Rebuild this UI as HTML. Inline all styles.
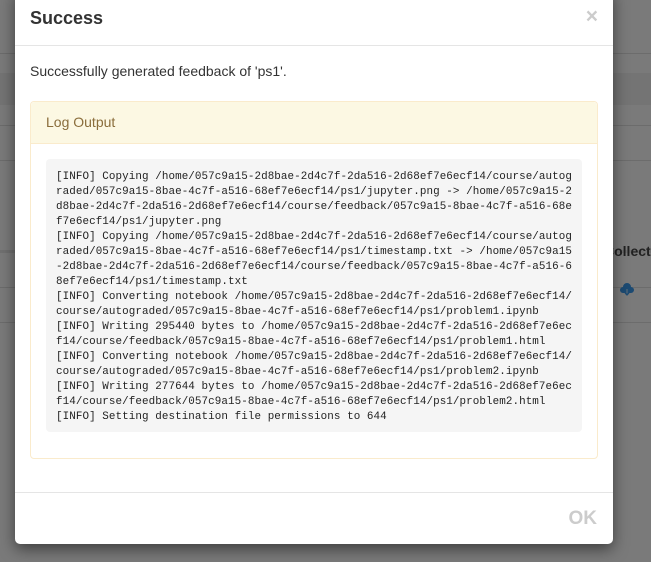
<!DOCTYPE html>
<html><head><meta charset="utf-8"><style>
html,body{margin:0;padding:0;width:651px;height:562px;overflow:hidden;background:#7a7a7a;font-family:"Liberation Sans",Arial,sans-serif;}
.bgline{position:absolute;left:0;right:0;height:1px;background:#6c6c6c;}
.modal{position:absolute;left:15px;top:-10px;width:598px;height:554px;background:#fff;border-radius:0 0 5px 5px;box-shadow:0 5px 15px rgba(0,0,0,.5);}
.hdr{position:absolute;left:0;right:0;top:0;height:55px;border-bottom:1px solid #e5e5e5;}
.title{position:absolute;left:15px;top:18px;font-size:18px;font-weight:bold;color:#333;}
.close{position:absolute;right:15px;top:15px;font-size:21px;font-weight:bold;color:#ccc;}
.msg{position:absolute;left:15px;top:73px;font-size:14px;color:#333;}
.panel{position:absolute;left:15px;top:111px;width:566px;height:356px;border:1px solid #faebcc;border-radius:4px;}
.ph{height:41px;background:#fcf8e3;border-bottom:1px solid #faebcc;color:#8a6d3b;font-size:14px;line-height:41px;padding-left:15px;border-radius:4px 4px 0 0;}
pre{position:absolute;left:15px;top:57px;width:516px;height:262px;margin:0;padding:11px 10px 0 10px;background:#f5f5f5;border-radius:4px;font-family:"Liberation Mono","DejaVu Sans Mono",monospace;font-size:10.9px;letter-spacing:0.08px;line-height:15px;color:#222;white-space:pre;overflow:hidden;}
.ftr{position:absolute;left:0;right:0;top:502px;border-top:1px solid #e5e5e5;}
.ok{position:absolute;right:16px;top:518px;font-size:19px;font-weight:bold;color:#ccc;}
</style></head><body>
<div class="bgline" style="top:53px"></div>
<div style="position:absolute;left:0;right:0;top:73px;height:32px;background:#747474"></div>
<div class="bgline" style="top:125px"></div>
<div class="bgline" style="top:160px"></div>
<div class="bgline" style="top:250px;height:3px;background:#707070"></div>
<div class="bgline" style="top:287px"></div>
<div class="bgline" style="top:322px"></div>
<div style="position:absolute;left:604px;top:243px;font-size:14px;font-weight:bold;color:#222">Collect</div>
<svg style="position:absolute;left:619px;top:282px" width="16" height="16" viewBox="0 0 16 16"><path d="M4 11a3 3 0 0 1 0-6 4 4 0 0 1 8 0 3 3 0 0 1 0 6z" fill="#1c4a72"/><path d="M8 7v7M5.5 11.5 8 14l2.5-2.5" stroke="#7a7a7a" stroke-width="2" fill="none"/><path d="M8 7v6M6 11l2 2 2-2" stroke="#1c4a72" stroke-width="1.2" fill="none"/></svg>
<div class="modal">
<div class="hdr"><div class="title">Success</div><div class="close">×</div></div>
<div class="msg">Successfully generated feedback of 'ps1'.</div>
<div class="panel"><div class="ph">Log Output</div>
<pre>[INFO] Copying /home/057c9a15-2d8bae-2d4c7f-2da516-2d68ef7e6ecf14/course/autog
raded/057c9a15-8bae-4c7f-a516-68ef7e6ecf14/ps1/jupyter.png -&gt; /home/057c9a15-2
d8bae-2d4c7f-2da516-2d68ef7e6ecf14/course/feedback/057c9a15-8bae-4c7f-a516-68e
f7e6ecf14/ps1/jupyter.png
[INFO] Copying /home/057c9a15-2d8bae-2d4c7f-2da516-2d68ef7e6ecf14/course/autog
raded/057c9a15-8bae-4c7f-a516-68ef7e6ecf14/ps1/timestamp.txt -&gt; /home/057c9a15
-2d8bae-2d4c7f-2da516-2d68ef7e6ecf14/course/feedback/057c9a15-8bae-4c7f-a516-6
8ef7e6ecf14/ps1/timestamp.txt
[INFO] Converting notebook /home/057c9a15-2d8bae-2d4c7f-2da516-2d68ef7e6ecf14/
course/autograded/057c9a15-8bae-4c7f-a516-68ef7e6ecf14/ps1/problem1.ipynb
[INFO] Writing 295440 bytes to /home/057c9a15-2d8bae-2d4c7f-2da516-2d68ef7e6ec
f14/course/feedback/057c9a15-8bae-4c7f-a516-68ef7e6ecf14/ps1/problem1.html
[INFO] Converting notebook /home/057c9a15-2d8bae-2d4c7f-2da516-2d68ef7e6ecf14/
course/autograded/057c9a15-8bae-4c7f-a516-68ef7e6ecf14/ps1/problem2.ipynb
[INFO] Writing 277644 bytes to /home/057c9a15-2d8bae-2d4c7f-2da516-2d68ef7e6ec
f14/course/feedback/057c9a15-8bae-4c7f-a516-68ef7e6ecf14/ps1/problem2.html
[INFO] Setting destination file permissions to 644</pre>
</div>
<div class="ftr"></div>
<div class="ok">OK</div>
</div>
</body></html>
